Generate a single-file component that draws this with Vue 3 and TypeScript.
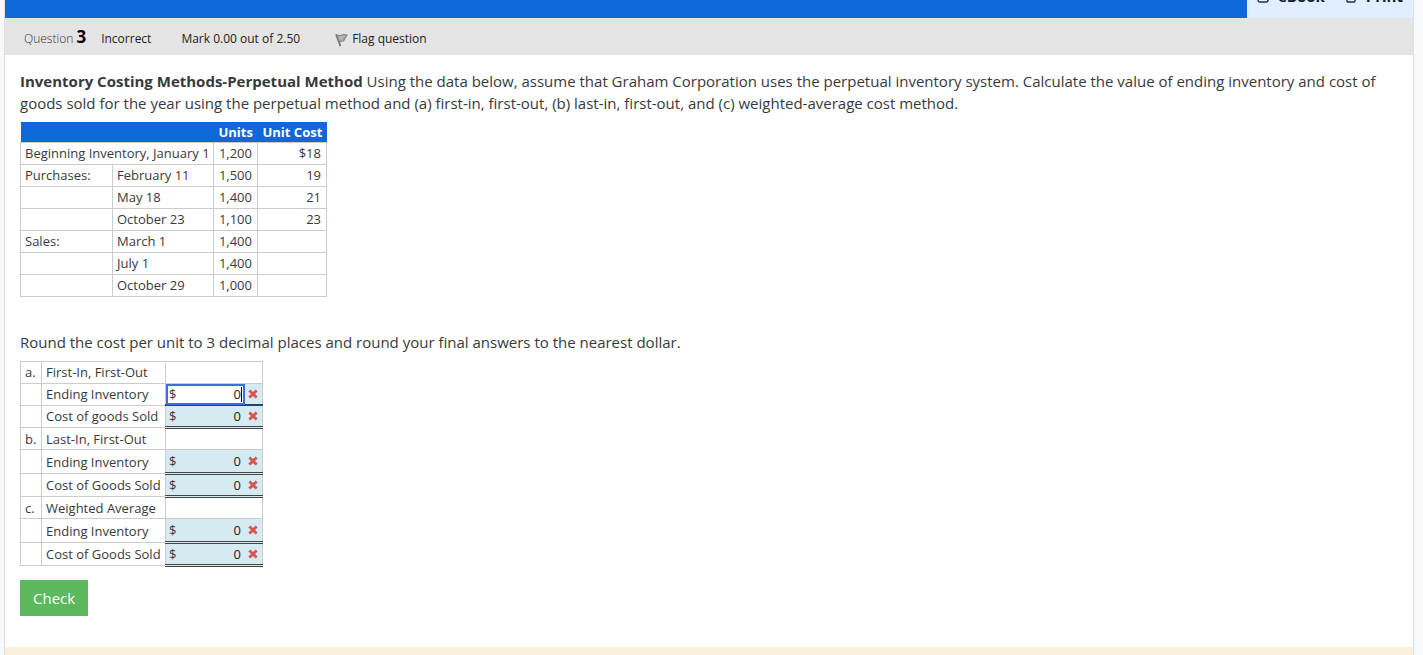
<script setup lang="ts">
import { reactive } from 'vue'

interface StockRow {
  group: string
  label: string
  units: string
  cost: string
}

interface AnswerRow {
  id: string
  letter: string
  label: string
  kind: 'title' | 'single' | 'double'
  active?: boolean
}

const stock: StockRow[] = [
  { group: 'Purchases:', label: 'February 11', units: '1,500', cost: '19' },
  { group: '', label: 'May 18', units: '1,400', cost: '21' },
  { group: '', label: 'October 23', units: '1,100', cost: '23' },
  { group: 'Sales:', label: 'March 1', units: '1,400', cost: '' },
  { group: '', label: 'July 1', units: '1,400', cost: '' },
  { group: '', label: 'October 29', units: '1,000', cost: '' },
]

const rows: AnswerRow[] = [
  { id: 'a', letter: 'a.', label: 'First-In, First-Out', kind: 'title' },
  { id: 'a1', letter: '', label: 'Ending Inventory', kind: 'single', active: true },
  { id: 'a2', letter: '', label: 'Cost of goods Sold', kind: 'double' },
  { id: 'b', letter: 'b.', label: 'Last-In, First-Out', kind: 'title' },
  { id: 'b1', letter: '', label: 'Ending Inventory', kind: 'double' },
  { id: 'b2', letter: '', label: 'Cost of Goods Sold', kind: 'double' },
  { id: 'c', letter: 'c.', label: 'Weighted Average', kind: 'title' },
  { id: 'c1', letter: '', label: 'Ending Inventory', kind: 'double' },
  { id: 'c2', letter: '', label: 'Cost of Goods Sold', kind: 'double' },
]

const answers = reactive<Record<string, string>>({
  a1: '0', a2: '0', b1: '0', b2: '0', c1: '0', c2: '0',
})
</script>

<template>
  <div class="page">
    <main class="sheet">
      <header class="topbar">
        <nav class="tools">
          <a href="#ebook" class="tool">
            <svg width="12" height="14" viewBox="0 0 12 14" fill="none" stroke="#17324d" stroke-width="1.4">
              <rect x="1" y="1" width="10" height="12" rx="2" />
            </svg>
            <span>eBook</span>
          </a>
          <a href="#print" class="tool">
            <svg width="12" height="14" viewBox="0 0 12 14" fill="none" stroke="#17324d" stroke-width="1.4">
              <rect x="2" y="1" width="8" height="12" rx="1" />
            </svg>
            <span>Print</span>
          </a>
        </nav>
      </header>

      <div class="info">
        <span class="number">Question <strong>3</strong></span>
        <span class="state">Incorrect</span>
        <span class="mark">Mark 0.00 out of 2.50</span>
        <a href="#flag" class="flag">
          <svg width="13" height="14" viewBox="0 0 13 14">
            <path d="M1 1.5 Q4 3.2 7 2 Q9.5 1 12 2 L8.5 8 Q6 8 4.6 9 L5.4 13" fill="#a8a8a8" stroke="#858585" stroke-width="1.2" stroke-linejoin="round" />
            <path d="M1 1.5 L5.4 13.2" fill="none" stroke="#777" stroke-width="1.6" />
            <path d="M5 4.2 L6.4 7 M5 4.2 L8.5 3.6" fill="none" stroke="#ccc" stroke-width="0.8" />
          </svg>
          <span>Flag question</span>
        </a>
      </div>

      <section class="content">
        <p class="intro">
          <b>Inventory Costing Methods-Perpetual Method</b> Using the data below, assume that Graham Corporation uses the perpetual inventory system. Calculate the value of ending inventory and cost of goods sold for the year using the perpetual method and (a) first-in, first-out, (b) last-in, first-out, and (c) weighted-average cost method.
        </p>

        <table class="grid stock">
          <colgroup>
            <col class="c-group"><col class="c-label"><col class="c-units"><col class="c-cost">
          </colgroup>
          <thead>
            <tr><th colspan="2"></th><th>Units</th><th>Unit Cost</th></tr>
          </thead>
          <tbody>
            <tr><td colspan="2">Beginning Inventory, January 1</td><td class="num">1,200</td><td class="num">$18</td></tr>
            <tr v-for="row in stock" :key="row.label">
              <td>{{ row.group }}</td>
              <td>{{ row.label }}</td>
              <td class="num">{{ row.units }}</td>
              <td class="num">{{ row.cost }}</td>
            </tr>
          </tbody>
        </table>

        <p class="note">Round the cost per unit to 3 decimal places and round your final answers to the nearest dollar.</p>

        <table class="grid answers">
          <colgroup>
            <col class="c-letter"><col class="c-name"><col class="c-answer">
          </colgroup>
          <tbody>
            <tr v-for="row in rows" :key="row.id" :class="row.kind">
              <td>{{ row.letter }}</td>
              <td>
                <label v-if="row.kind !== 'title'" :for="row.id">{{ row.label }}</label>
                <template v-else>{{ row.label }}</template>
              </td>
              <td class="cell">
                <div v-if="row.kind !== 'title'" class="answer">
                  <span class="box" :class="{ active: row.active }">
                    <span>$</span>
                    <input :id="row.id" v-model="answers[row.id]" type="text" inputmode="numeric" autocomplete="off">
                    <i v-if="row.active" class="caret"></i>
                  </span>
                  <svg class="wrong" width="10" height="10" viewBox="0 0 9 9" role="img" aria-label="Incorrect">
                    <path d="M1.2 1.4 L7.8 7.6 M7.8 1.4 L1.2 7.6" stroke="#d9534f" stroke-width="2.6" />
                  </svg>
                </div>
              </td>
            </tr>
          </tbody>
        </table>

        <button type="button" class="check">Check</button>
      </section>
      <div class="feedback"></div>
    </main>
  </div>
</template>

<style>
html, body { height: 100%; }
body { margin: 0; overflow: hidden; background: #f8f9fb; }
#app { height: 100%; }
</style>

<style scoped>
.page {
  box-sizing: border-box;
  min-height: 100%;
  padding: 0 9px 0 4px;
  font-family: "Open Sans", "Noto Sans", sans-serif;
  font-size: 15px;
  line-height: 22px;
  color: #373a3c;
}
.sheet {
  border: 1px solid #dedfe3;
  border-width: 0 1px;
  background: #fff;
}
.topbar {
  display: flex;
  justify-content: flex-end;
  height: 18px;
  overflow: hidden;
  background: #0f67da;
}
.tools {
  display: flex;
  align-items: flex-end;
  gap: 20px;
  height: 38px;
  margin-top: -20px;
  padding: 0 10px 12px;
  box-sizing: border-box;
  background: #e0eeff;
}
.tool {
  display: flex;
  align-items: center;
  gap: 9px;
  color: #10202f;
  font-size: 15px;
  font-weight: 700;
  line-height: 20px;
  text-decoration: none;
}
.info {
  display: flex;
  align-items: baseline;
  height: 37px;
  box-sizing: border-box;
  padding: 8px 19px 0;
  background: #e4e4e4;
  font-size: 12px;
  line-height: 22px;
  color: #222;
}
.number { font-weight: 300; color: #333; }
.number strong { font-size: 17px; font-weight: 700; color: #000; }
.state { margin-left: 15px; }
.mark { margin-left: 30px; }
.flag {
  display: flex;
  align-items: baseline;
  gap: 4px;
  margin-left: 35px;
  color: #222;
  text-decoration: none;
}
.flag svg { align-self: flex-end; margin-bottom: 3px; }
.content { padding: 15px 30px 31px 15px; }
p { margin: 0; }
.note { margin: 34px 0 8px; }
.intro { margin-bottom: 8px; }
.grid {
  border-collapse: collapse;
  table-layout: fixed;
  font-size: 13px;
  line-height: 21px;
}
.grid td {
  height: 21px;
  padding: 0 4px;
  border: 1px solid #ccc;
  white-space: nowrap;
}
.grid th {
  height: 19px;
  padding: 0 5px;
  background: #0f67da;
  border-top: 1px solid #0f67da;
  color: #fff;
  line-height: 19px;
  font-weight: 700;
  text-align: right;
  white-space: nowrap;
}
.stock { width: 306px; }
.c-group { width: 92px; }
.c-label { width: 101px; }
.c-units { width: 44px; }
.c-cost { width: 69px; }
.grid .num { padding-right: 5px; text-align: right; }
.answers { width: 242px; }
.c-letter { width: 21px; }
.c-name { width: 124px; }
.c-answer { width: 97px; }
.double + .title td,
.double td,
.single td { height: 20px; line-height: 20px; }
.grid .cell { padding: 0; vertical-align: top; }
.single .cell, .double .cell { background: #d5eaf1; }
.grid .single .cell { border-bottom: 2px solid #24446b; }
.grid .double .cell { border-bottom: 3px double #444; }
.answer {
  display: flex;
  align-items: center;
  justify-content: space-between;
  height: 20px;
  padding-right: 4px;
}
.title + .double .answer { height: 22px; }
.box {
  position: relative;
  display: flex;
  align-items: center;
  box-sizing: border-box;
  width: 79px;
  height: 21px;
  padding: 0 2px 0 1px;
  border: 2px solid transparent;
}
.box.active { border-color: #3b6fdc; background: #fff; }
.box input {
  flex: 1;
  min-width: 0;
  padding: 0;
  border: 0;
  outline: 0;
  background: transparent;
  color: #222;
  font: inherit;
  text-align: right;
}
.caret {
  position: absolute;
  top: 1px;
  right: 1px;
  width: 1px;
  height: 15px;
  background: #000;
}
.check {
  display: block;
  height: 36px;
  margin-top: 13px;
  padding: 0 13px;
  border: 0;
  background: #5cb85c;
  color: #fff;
  font: inherit;
}
.feedback { height: 8px; background: #fcefdc; }
</style>
